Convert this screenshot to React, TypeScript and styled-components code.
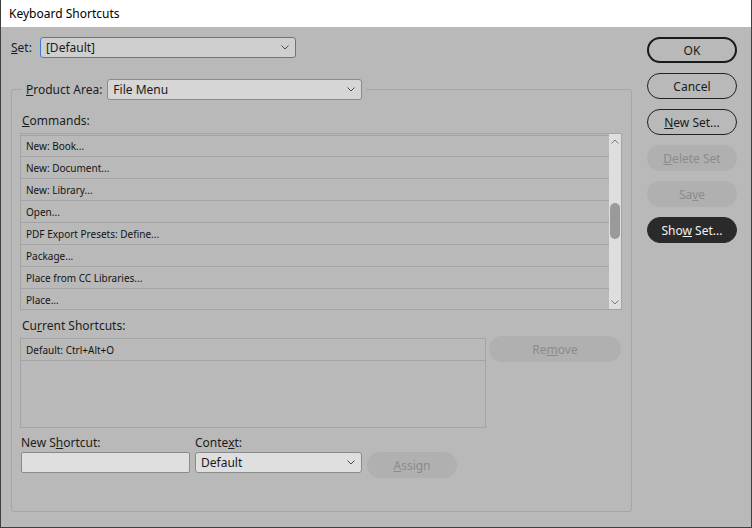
import React from "react";
import styled, { createGlobalStyle, css } from "styled-components";

const GlobalStyle = createGlobalStyle`
  html, body {
    margin: 0;
    padding: 0;
    background: #ffffff;
  }
  * {
    box-sizing: border-box;
  }
`;

const commands = [
  "New: Book...",
  "New: Document...",
  "New: Library...",
  "Open...",
  "PDF Export Presets: Define...",
  "Package...",
  "Place from CC Libraries...",
  "Place...",
];

const Chevron = ({ color = "#4a4a4a", up = false }: { color?: string; up?: boolean }) => (
  <svg width="8" height="5" viewBox="0 0 8 5">
    <polyline
      points={up ? "0.5,4.5 4,1 7.5,4.5" : "0.5,0.5 4,4 7.5,0.5"}
      fill="none"
      stroke={color}
      strokeWidth="1"
    />
  </svg>
);

// a label with one underlined mnemonic letter
const Mnemonic = ({ text, at }: { text: string; at: number }) => (
  <span>
    {text.slice(0, at)}
    <u>{text[at]}</u>
    {text.slice(at + 1)}
  </span>
);

export default function App() {
  return (
    <>
      <GlobalStyle />
      <Window>
        <TitleBar>Keyboard Shortcuts</TitleBar>
        <Body>
          <Main>
            <SetRow>
              <Label>
                <Mnemonic text="Set:" at={0} />
              </Label>
              <Select $width={256} $focused>
                <span>[Default]</span>
                <Chevron />
              </Select>
            </SetRow>

            <Group>
              <Legend>
                <Label>
                  <Mnemonic text="Product Area:" at={0} />
                </Label>
                <Select $width={255}>
                  <span>File Menu</span>
                  <Chevron />
                </Select>
              </Legend>

              <SectionLabel $top={13}>
                <Mnemonic text="Commands:" at={0} />
              </SectionLabel>
              <CommandList>
                <Rows>
                  {commands.map((c) => (
                    <Row key={c}>{c}</Row>
                  ))}
                </Rows>
                <ScrollBar>
                  <Arrow>
                    <Chevron color="#7a7a7a" up />
                  </Arrow>
                  <Track>
                    <Thumb style={{ marginTop: 55 }} />
                  </Track>
                  <Arrow>
                    <Chevron color="#7a7a7a" />
                  </Arrow>
                </ScrollBar>
              </CommandList>

              <SectionLabel $top={8}>
                <Mnemonic text="Current Shortcuts:" at={2} />
              </SectionLabel>
              <CurrentRow>
                <ShortcutList>
                  <Row>Default: Ctrl+Alt+O</Row>
                </ShortcutList>
                <PillButton $variant="disabled" $width={132} style={{ marginTop: -2 }}>
                  <Mnemonic text="Remove" at={2} />
                </PillButton>
              </CurrentRow>

              <NewShortcutGrid>
                <Label>
                  <Mnemonic text="New Shortcut:" at={5} />
                </Label>
                <Label>
                  <Mnemonic text="Context:" at={5} />
                </Label>
                <span />
                <TextInput />
                <Select $width={167} $light>
                  <span>Default</span>
                  <Chevron />
                </Select>
                <PillButton $variant="disabled" $width={90}>
                  <Mnemonic text="Assign" at={0} />
                </PillButton>
              </NewShortcutGrid>
            </Group>
          </Main>

          <Side>
            <PillButton $variant="primary">OK</PillButton>
            <PillButton>Cancel</PillButton>
            <PillButton>
              <Mnemonic text="New Set..." at={0} />
            </PillButton>
            <PillButton $variant="disabled">
              <Mnemonic text="Delete Set" at={0} />
            </PillButton>
            <PillButton $variant="disabled">
              <Mnemonic text="Save" at={2} />
            </PillButton>
            <PillButton $variant="dark">
              <Mnemonic text="Show Set..." at={3} />
            </PillButton>
          </Side>
        </Body>
      </Window>
    </>
  );
}

const Window = styled.div`
  width: 752px;
  height: 528px;
  display: flex;
  flex-direction: column;
  border: 1px solid #3f3f3f;
  border-top: none;
  font-family: "Noto Sans", "Open Sans", sans-serif;
  font-size: 12px;
  color: #1c1c1c;
`;

const TitleBar = styled.div`
  height: 27px;
  flex-shrink: 0;
  display: flex;
  align-items: center;
  padding-left: 8px;
  background: #ffffff;
  color: #000000;
`;

const Body = styled.div`
  flex: 1;
  display: flex;
  gap: 15px;
  padding: 10px 14px 15px 10px;
  background: #b9b9b9;
`;

const Main = styled.div`
  width: 621px;
  display: flex;
  flex-direction: column;
`;

const SetRow = styled.div`
  display: flex;
  align-items: center;
  gap: 8px;
  height: 21px;
`;

const Label = styled.span`
  line-height: 16px;
  white-space: nowrap;
`;

const SectionLabel = styled.div<{ $top: number }>`
  line-height: 16px;
  padding-left: 2px;
  margin-top: ${(p) => p.$top}px;
  margin-bottom: 4px;
`;

const Select = styled.div<{ $width: number; $focused?: boolean; $light?: boolean }>`
  width: ${(p) => p.$width}px;
  height: 21px;
  display: flex;
  align-items: center;
  justify-content: space-between;
  padding: 0 5px 0 5px;
  border: 1px solid #8a8a8a;
  border-radius: 3px;
  background: ${(p) => (p.$light ? "#dfdfdf" : "#d6d6d6")};
  color: #1a1a1a;

  ${(p) =>
    p.$focused &&
    css`
      border-color: #3d7bd9;
      background: #cfcfcf;
    `}

  svg {
    margin-right: 1px;
  }
`;

const Group = styled.fieldset`
  flex: 1;
  margin: 21px 0 0;
  padding: 0 9px 0 8px;
  border: 1px solid #a6a6a6;
  border-radius: 3px;
  min-width: 0;
`;

const Legend = styled.legend`
  display: flex;
  align-items: center;
  gap: 5px;
  margin-left: 2px;
  padding: 0 4px;
`;

const CommandList = styled.div`
  height: 177px;
  display: flex;
  border: 1px solid #a4a4a4;
  overflow: hidden;
`;

const Rows = styled.div`
  flex: 1;
  padding-top: 1px;
`;

const Row = styled.div`
  height: 22px;
  display: flex;
  align-items: center;
  padding-left: 5px;
  border-bottom: 1px solid #a4a4a4;
  font-size: 10px;
  color: #141414;

  &:first-child {
    border-top: 1px solid #a4a4a4;
  }
`;

const ScrollBar = styled.div`
  width: 12px;
  display: flex;
  flex-direction: column;
  background: #dedede;
`;

const Arrow = styled.div`
  height: 14px;
  display: flex;
  align-items: center;
  justify-content: center;
`;

const Track = styled.div`
  flex: 1;
  display: flex;
  flex-direction: column;
  align-items: center;
`;

const Thumb = styled.div`
  width: 10px;
  height: 36px;
  border-radius: 5px;
  background: #9a9a9a;
`;

const CurrentRow = styled.div`
  display: flex;
  align-items: flex-start;
  gap: 3px;
`;

const ShortcutList = styled.div`
  width: 466px;
  height: 90px;
  border: 1px solid #a4a4a4;

  ${Row}:first-child {
    border-top: none;
  }
`;

const NewShortcutGrid = styled.div`
  display: grid;
  grid-template-columns: 169px 167px 90px;
  column-gap: 5px;
  row-gap: 1px;
  align-items: start;
  margin-top: 7px;
  padding-left: 1px;
`;

const TextInput = styled.div`
  height: 21px;
  border: 1px solid #8a8a8a;
  border-radius: 2px;
  background: #dfdfdf;
`;

const Side = styled.div`
  width: 90px;
  display: flex;
  flex-direction: column;
  gap: 10px;
`;

type Variant = "normal" | "primary" | "disabled" | "dark";

const PillButton = styled.div<{ $variant?: Variant; $width?: number }>`
  width: ${(p) => p.$width ?? 90}px;
  height: 26px;
  flex-shrink: 0;
  display: flex;
  align-items: center;
  justify-content: center;
  border-radius: 13px;
  border: 1px solid #222222;
  color: #1a1a1a;
  white-space: nowrap;

  ${(p) =>
    p.$variant === "primary" &&
    css`
      border: 2px solid #1a1a1a;
    `}

  ${(p) =>
    p.$variant === "disabled" &&
    css`
      border-color: transparent;
      background: #b0b0b0;
      color: #8b8b8b;
    `}

  ${(p) =>
    p.$variant === "dark" &&
    css`
      border-color: #2a2a2a;
      background: #2a2a2a;
      color: #f2f2f2;
    `}
`;
